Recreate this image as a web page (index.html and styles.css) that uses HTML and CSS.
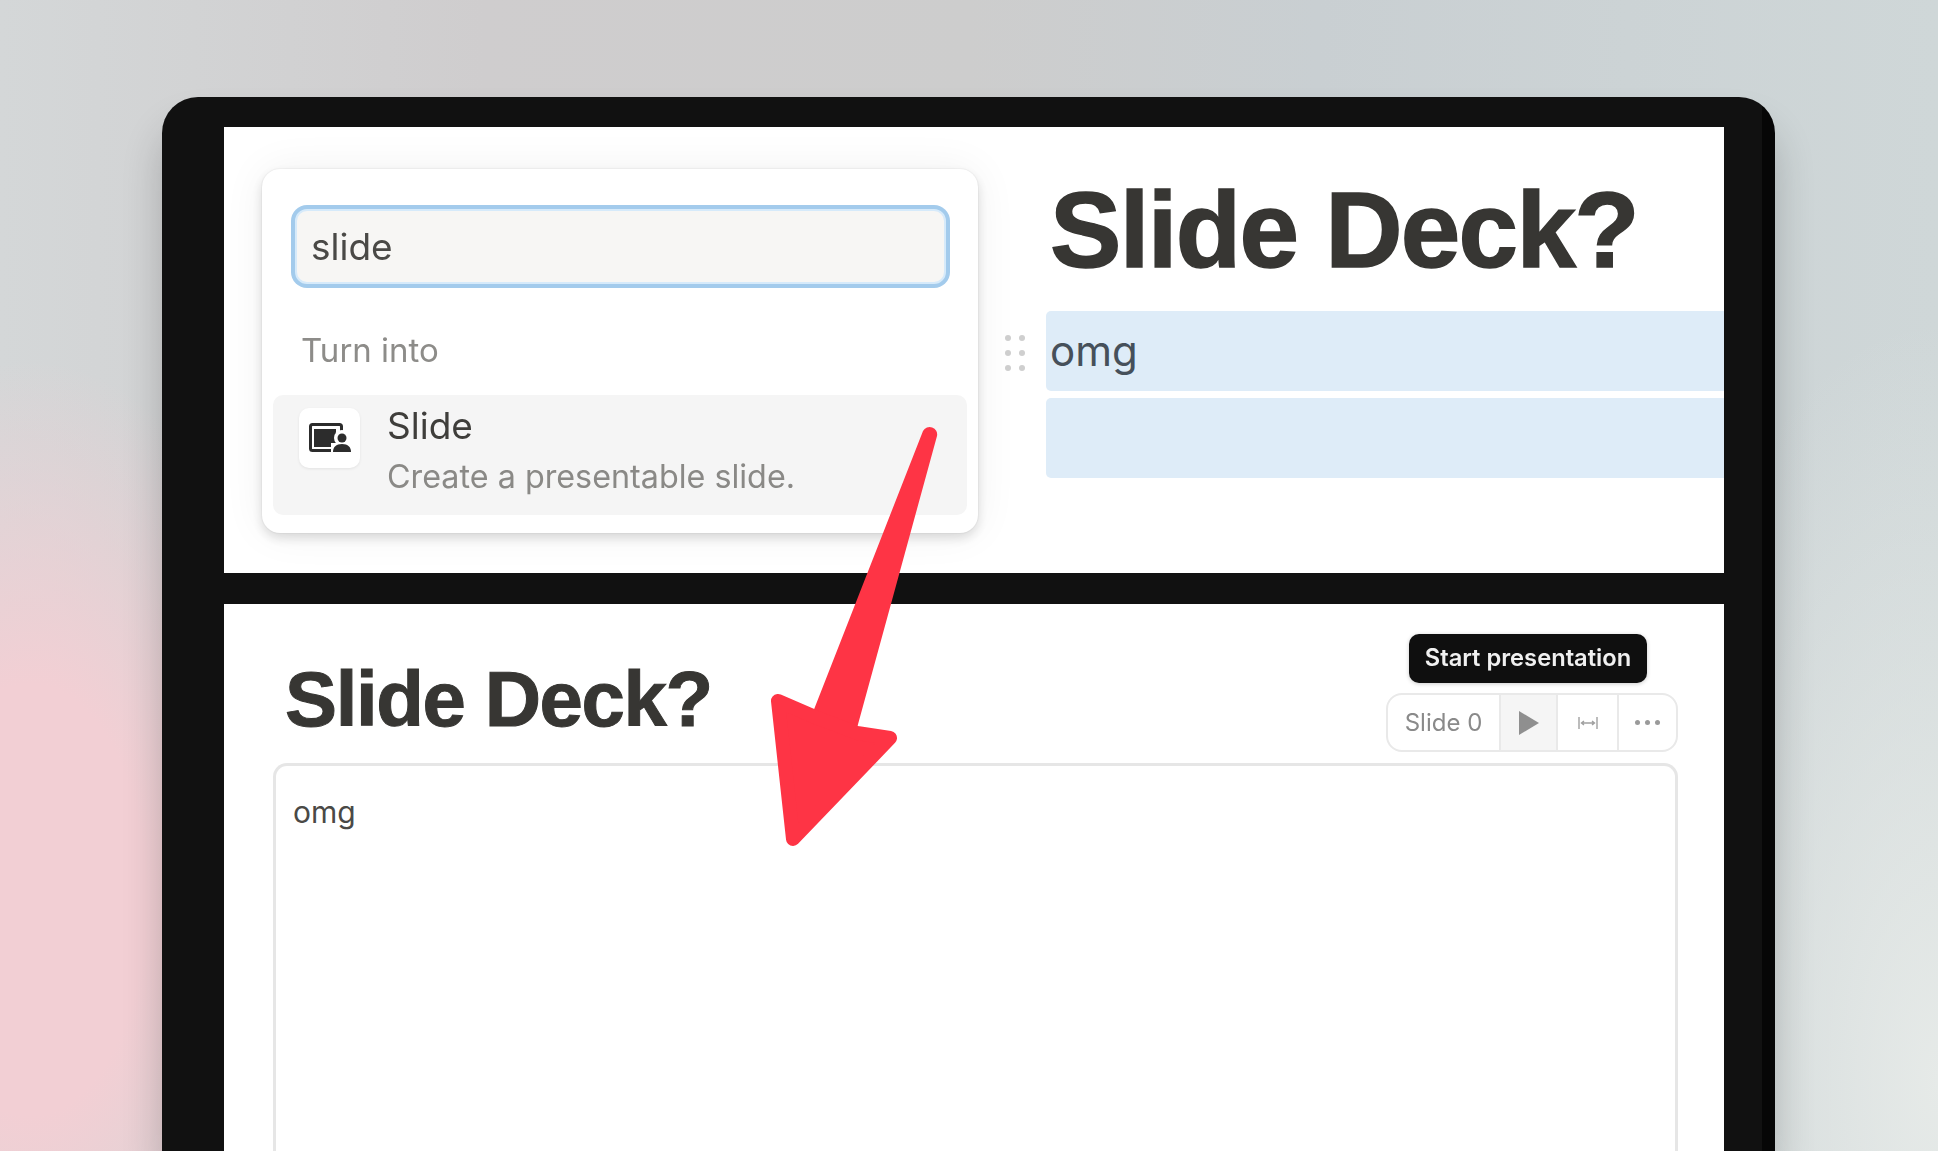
FILE: index.html
```html
<!DOCTYPE html>
<html lang="en">
<head>
    <meta charset="UTF-8">
    <title>Slide Deck?</title>
    <link rel="stylesheet" href="styles.css">
</head>
<body>
    <div class="frame">
        <section class="panel panel-top">
            <div class="popup">
                <div class="search">slide</div>
                <div class="section-label">Turn into</div>
                <div class="item">
                    <div class="item-icon">
                        <svg width="42" height="30" viewBox="0 0 42 30">
                            <rect x="1.500" y="1.500" width="31" height="26" rx="2" fill="none" stroke="#2c2c2c" stroke-width="3"/>
                            <rect x="5" y="6" width="22" height="18" fill="#2c2c2c"/>
                            <circle cx="33" cy="15" r="8" fill="#ffffff"/>
                            <path d="M22 20h22v10H22z" fill="#ffffff"/>
                            <circle cx="33" cy="15" r="4.500" fill="#2c2c2c"/>
                            <path d="M24 29c0-5 3-8 9-8s9 3 9 8z" fill="#2c2c2c"/>
                        </svg>
                    </div>
                    <div class="item-text">
                        <div class="item-title">Slide</div>
                        <div class="item-desc">Create a presentable slide.</div>
                    </div>
                </div>
            </div>
            <div class="editor">
                <h1 class="title">Slide Deck?</h1>
                <div class="block-row">
                    <div class="grip">
                        <span></span><span></span><span></span><span></span><span></span><span></span>
                    </div>
                    <div class="block">omg</div>
                </div>
                <div class="block-row">
                    <div class="grip grip-empty"></div>
                    <div class="block"></div>
                </div>
            </div>
        </section>
        <section class="panel panel-bottom">
            <div class="deck-head">
                <h2 class="deck-title">Slide Deck?</h2>
                <div class="controls">
                    <div class="tooltip">Start presentation</div>
                    <div class="toolbar">
                        <div class="tool tool-name">Slide 0</div>
                        <div class="tool tool-play">
                            <svg width="20" height="24" viewBox="0 0 20 24"><path d="M0 0l20 12L0 24z" fill="#8f8f8f"/></svg>
                        </div>
                        <div class="tool tool-width">
                            <svg width="20" height="14" viewBox="0 0 20 14" fill="none" stroke="#a0a0a0" stroke-width="1.400">
                                <path d="M1 1v12M19 1v12M3.500 7h13M6 5L3.500 7 6 9M14 5l2.500 2L14 9"/>
                            </svg>
                        </div>
                        <div class="tool tool-more">
                            <span></span><span></span><span></span>
                        </div>
                    </div>
                </div>
            </div>
            <div class="slide-box">omg</div>
        </section>
    </div>
    <svg class="arrow" width="1938" height="1151" viewBox="0 0 1938 1151">
        <path d="M923 431a7.500 7.500 0 0 1 14 5L857 728l-44-16z" fill="#fe3445"/>
        <polygon points="778,701 815,717 857,733 890,738 793,839" fill="#fe3445" stroke="#fe3445" stroke-width="14" stroke-linejoin="round"/>
    </svg>
</body>
</html>
```

FILE: styles.css
```css
body {
    margin: 0;
    height: 1151px;
    overflow: hidden;
    position: relative;
    font-family: Inter, "Liberation Sans", sans-serif;
    color: #37352f;
    background-color: #d5d8da;
    background-image:
        radial-gradient(290px 540px at 30px 900px, #f2cfd4 0%, #f2cfd4 40%, rgba(242, 207, 212, 0) 100%),
        radial-gradient(320px 760px at 1938px 1080px, #e6eae8 0%, rgba(230, 234, 232, 0) 100%),
        linear-gradient(90deg, #d4d7d8 0%, #cfcdce 25%, #cdcdcd 50%, #c9cfd2 68%, #cfd7d8 100%);
}
.frame {
    position: absolute;
    left: 162px;
    top: 97px;
    width: 1613px;
    height: 1054px;
    box-sizing: border-box;
    padding: 30px 51px 0 62px;
    background: linear-gradient(90deg, #111111 1600px, #060606 1600px);
    border-radius: 36px 36px 0 0;
    box-shadow: 0 30px 40px rgba(0, 0, 0, 0.2);
    display: flex;
    flex-direction: column;
    gap: 31px;
}
.panel {
    background: #ffffff;
    flex-shrink: 0;
}
.panel-top {
    height: 446px;
    display: flex;
    overflow: hidden;
}
.panel-bottom {
    flex: 1;
    min-height: 0;
    display: flex;
    flex-direction: column;
    padding: 0 46px 0 49px;
}

/* turn into popup */
.popup {
    width: 716px;
    height: 364px;
    flex-shrink: 0;
    box-sizing: border-box;
    margin: 42px 0 0 38px;
    padding: 40px 11px 0 11px;
    background: #ffffff;
    border-radius: 18px;
    box-shadow: 0 0 2px rgba(0, 0, 0, 0.12), 0 5px 12px rgba(0, 0, 0, 0.14), 0 0 44px rgba(0, 0, 0, 0.06);
    filter: blur(0.5px);
}
.search {
    margin: 0 21px 0 22px;
    height: 75px;
    box-sizing: border-box;
    padding-left: 14px;
    line-height: 71px;
    font-size: 37px;
    color: #4a4946;
    background: #f7f6f4;
    border: 2px solid #d6eafa;
    border-radius: 12px;
    box-shadow: 0 0 0 4px #a3cbec;
}
.section-label {
    margin: 46px 0 0 28px;
    font-size: 33px;
    line-height: 40px;
    color: #8d8c89;
}
.item {
    margin-top: 25px;
    height: 120px;
    display: flex;
    background: #f5f5f5;
    border-radius: 10px;
}
.item-icon {
    width: 61px;
    height: 60px;
    margin: 13px 0 0 26px;
    display: flex;
    align-items: center;
    justify-content: center;
    background: #ffffff;
    border-radius: 10px;
    box-shadow: 0 1px 3px rgba(0, 0, 0, 0.08);
}
.item-text {
    margin: 9px 0 0 27px;
}
.item-title {
    font-size: 37px;
    line-height: 44px;
    color: #3f3e3b;
}
.item-desc {
    margin-top: 7px;
    font-size: 32.300px;
    line-height: 44px;
    color: #8a8986;
}

/* editor on the right of the popup */
.editor {
    flex: 1;
    min-width: 0;
}
.title {
    margin: 45px 0 0 72px;
    font-family: "Liberation Sans", Arial, sans-serif;
    font-size: 107px;
    line-height: 116px;
    font-weight: 700;
    letter-spacing: -1.700px;
    color: #373633;
    white-space: nowrap;
    -webkit-text-stroke: 1.500px #373633;
    filter: blur(0.5px);
}
.block-row {
    margin-left: 68px;
    display: flex;
}
.block-row + .block-row {
    margin-top: 7px;
}
.editor .block-row:first-of-type {
    margin-top: 23px;
}
.grip {
    width: 20px;
    height: 36px;
    margin: 24px 0 0 -41px;
    margin-right: 21px;
    display: grid;
    grid-template-columns: 6px 6px;
    justify-content: space-between;
    align-content: space-between;
    flex-shrink: 0;
}
.grip span {
    width: 6px;
    height: 6px;
    border-radius: 50%;
    background: #cfcfcf;
}
.grip-empty {
    visibility: hidden;
}
.block {
    flex: 1;
    height: 80px;
    box-sizing: border-box;
    padding-left: 4px;
    line-height: 80px;
    font-size: 42px;
    color: #46505a;
    background: #deecf8;
    border-radius: 5px 0 0 5px;
}

/* lower panel */
.deck-head {
    height: 159px;
    flex-shrink: 0;
    display: flex;
    justify-content: space-between;
}
.deck-title {
    margin: 47px 0 0 12px;
    font-family: "Liberation Sans", Arial, sans-serif;
    font-size: 78px;
    line-height: 96px;
    font-weight: 700;
    letter-spacing: -1.400px;
    color: #373633;
    white-space: nowrap;
    -webkit-text-stroke: 1px #373633;
    filter: blur(0.5px);
}
.controls {
    width: 292px;
    display: flex;
    flex-direction: column;
    align-items: flex-start;
    padding-top: 30px;
}
.tooltip {
    width: 238px;
    height: 49px;
    margin-left: 23px;
    line-height: 47px;
    text-align: center;
    font-size: 23.700px;
    font-weight: 600;
    color: #f0f0f0;
    background: #0f0f0f;
    border-radius: 10px;
    box-shadow: 0 1px 4px rgba(0, 0, 0, 0.2);
    filter: blur(0.4px);
}
.toolbar {
    margin-top: 10px;
    width: 292px;
    height: 59px;
    box-sizing: border-box;
    display: flex;
    border: 2px solid #e9e9e9;
    border-radius: 16px;
    overflow: hidden;
    filter: blur(0.4px);
}
.tool {
    display: flex;
    align-items: center;
    justify-content: center;
    border-left: 2px solid #e9e9e9;
    box-sizing: border-box;
}
.tool-name {
    width: 111px;
    border-left: none;
    font-size: 24px;
    color: #8a8a8a;
}
.tool-play {
    width: 57px;
    background: #f5f5f5;
}
.tool-width {
    width: 61px;
}
.tool-more {
    flex: 1;
    gap: 5px;
}
.tool-more span {
    width: 5px;
    height: 5px;
    border-radius: 50%;
    background: #9a9a9a;
}
.slide-box {
    flex: 1;
    box-sizing: border-box;
    padding: 26px 17px;
    font-size: 30px;
    line-height: 40px;
    color: #4a4946;
    border: 3px solid #e6e6e6;
    border-bottom: none;
    border-radius: 14px 14px 0 0;
}

/* annotation drawn over the screenshot */
.arrow {
    position: absolute;
    left: 0;
    top: 0;
    pointer-events: none;
}
```
